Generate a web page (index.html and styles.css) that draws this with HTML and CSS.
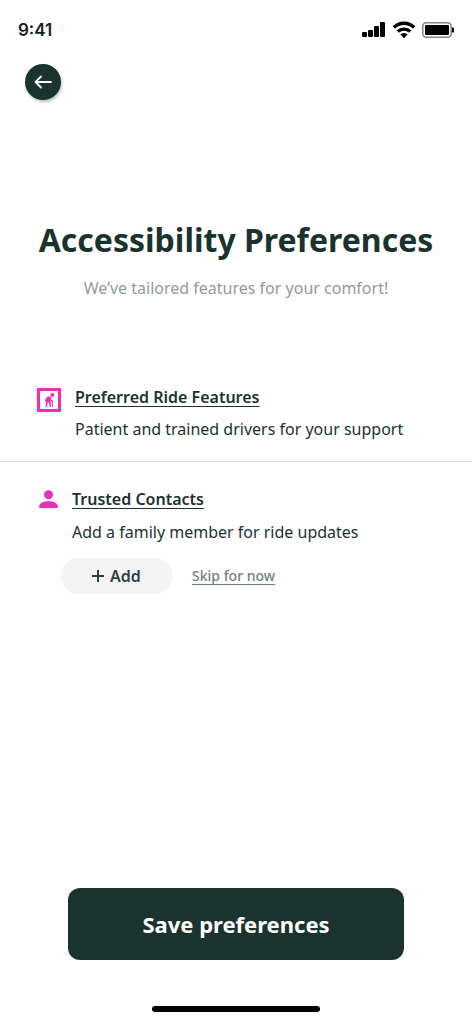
FILE: index.html
```html
<!DOCTYPE html>
<html lang="en">
<head>
<meta charset="utf-8">
<meta name="viewport" content="width=device-width, initial-scale=1">
<title>Accessibility Preferences</title>
<link rel="stylesheet" href="styles.css">
</head>
<body>
<div class="screen">
  <header class="status-bar">
    <span class="time">9:41</span>
    <div class="indicators">
      <svg width="24" height="16" viewBox="0 0 24 16" fill="#000" aria-hidden="true">
        <rect x="0" y="10" width="5" height="5" rx="1"/><rect x="6" y="8" width="5" height="7" rx="1"/><rect x="12" y="4" width="5" height="11" rx="1"/><rect x="18" y="0" width="5" height="15" rx="1"/>
      </svg>
      <svg width="24" height="18" viewBox="0 0 24 18" aria-hidden="true">
        <path d="M1.800 6.500a14.500 14.500 0 0 1 20.400 0M5.800 10.600a9 9 0 0 1 12.400 0" fill="none" stroke="#000" stroke-width="3.400"/>
        <path d="M12 17.200 8.300 13.600a5.300 5.300 0 0 1 7.400 0Z"/>
      </svg>
      <svg width="32" height="16" viewBox="0 0 32 16" aria-hidden="true">
        <rect x=".8" y=".8" width="28.400" height="14.400" rx="3.500" fill="none" stroke="#7d8785" stroke-width="1.500"/>
        <rect x="3" y="3" width="24" height="10" rx="1"/>
        <path d="M30 5.500h1q1 0 1 1v3q0 1-1 1h-1Z"/>
      </svg>
    </div>
  </header>
  <nav class="nav">
    <button class="back" type="button" aria-label="Back">
      <svg width="18" height="14" viewBox="0 0 18 14" fill="none" stroke="#fff" stroke-width="1.800" stroke-linecap="round" stroke-linejoin="round" aria-hidden="true"><path d="M17 7H1.500M7 1.500 1.500 7 7 12.500"/></svg>
    </button>
  </nav>
  <main class="content">
    <div class="intro">
      <h1 class="title">Accessibility Preferences</h1>
      <p class="subtitle">We’ve tailored features for your comfort!</p>
    </div>
    <section class="item">
      <svg class="icon" width="24" height="24" viewBox="0 0 24 24" aria-hidden="true">
        <rect x="1.500" y="1.500" width="21" height="21" fill="none" stroke="#ed2fb8" stroke-width="3"/>
        <circle cx="15.300" cy="7" r="2" fill="#ed2fb8"/>
        <path d="M8 13.500v-1.300Q9 8.600 12.500 8.200L14 9.200v3.300l-1 1 .9 1.500V19h-1.500v-3.200l-1.500-1.500-.9 4.700H8.400l.9-6v.5ZM13.500 12h1.300q1.200 0 1.200 1v6h-.9v-5.800h-1.600Z" fill="#ed2fb8"/>
      </svg>
      <div class="details">
        <h2 class="heading">Preferred Ride Features</h2>
        <p class="text">Patient and trained drivers for your support</p>
      </div>
    </section>
    <section class="item contacts">
      <svg class="icon" width="20" height="20" viewBox="0 0 20 20" fill="#ed2fb8" aria-hidden="true">
        <circle cx="9.500" cy="4.700" r="4.500"/><path d="M.2 18v-1.700c0-3.300 4.500-5.100 9.300-5.100s9.300 1.800 9.300 5.100V18Z"/>
      </svg>
      <div class="details">
        <h2 class="heading">Trusted Contacts</h2>
        <p class="text">Add a family member for ride updates</p>
      </div>
    </section>
    <div class="actions">
      <button class="add" type="button">
        <svg width="12" height="12" viewBox="0 0 12 12" stroke="#2b4340" stroke-width="2" aria-hidden="true"><path d="M6 0v12M0 6h12"/></svg>
        Add
      </button>
      <a class="skip" href="#">Skip for now</a>
    </div>
  </main>
  <footer class="footer">
    <button class="save" type="button">Save preferences</button>
    <div class="home-bar"></div>
  </footer>
</div>
</body>
</html>
```
FILE: styles.css
```css
* { box-sizing: border-box; }
body { margin: 0; background: #fefefe; color: #1b332f; font-family: "Noto Sans", sans-serif; }
h1, h2, p { margin: 0; }
button { border: 0; font: inherit; cursor: pointer; }
svg { display: block; flex: none; }

.screen { min-height: 100vh; display: flex; flex-direction: column; }
.status-bar { height: 60px; padding: 0 18px; display: flex; align-items: center; justify-content: space-between; }
.time { font: 600 17px/20px Inter, sans-serif; color: #10211e; }
.indicators { display: flex; align-items: center; gap: 6px; }

.nav { padding: 4px 25px 0; }
.back { width: 36px; height: 36px; padding: 0; border-radius: 50%; background: #1b332f; box-shadow: 1px 2px 3px rgba(0, 0, 0, .25); display: grid; place-items: center; }

.content { flex: 1; }
.intro { padding: 116px 16px 0; text-align: center; }
.title { font-size: 32px; line-height: 48px; font-weight: 700; white-space: nowrap; }
.subtitle { margin-top: 12px; font-size: 16px; line-height: 24px; color: #949b99; }

.item { margin-top: 85px; padding: 0 37px 20px; display: flex; gap: 14px; border-bottom: 1px solid #dcdcdc; }
.icon { margin-top: 3px; }
.heading { font-size: 16px; line-height: 24px; font-weight: 600; text-decoration: underline; text-decoration-thickness: 1px; text-underline-offset: 3px; }
.text { margin-top: 8px; font-size: 16px; line-height: 24px; }
.contacts { margin-top: 25px; padding: 0 39px; gap: 13px; border: 0; }
.contacts .text { margin-top: 9px; }

.actions { margin-top: 14px; padding: 0 61px; display: flex; align-items: center; gap: 20px; }
.add { width: 111px; height: 36px; padding: 0; border-radius: 18px; background: #f3f3f3; color: #2b4340; font-size: 16px; font-weight: 600; display: flex; align-items: center; justify-content: center; gap: 6px; }
.skip { font-size: 14px; line-height: 20px; font-weight: 500; color: #74807d; text-underline-offset: 3px; text-decoration-thickness: 1px; }

.footer { padding: 0 68px 12px; display: flex; flex-direction: column; align-items: center; gap: 46px; }
.save { width: 100%; padding: 18px; border-radius: 12px; background: #1b332f; color: #fff; font-size: 22px; line-height: 36px; font-weight: 700; }
.home-bar { width: 50%; height: 6px; border-radius: 3px; background: #000; }
```
